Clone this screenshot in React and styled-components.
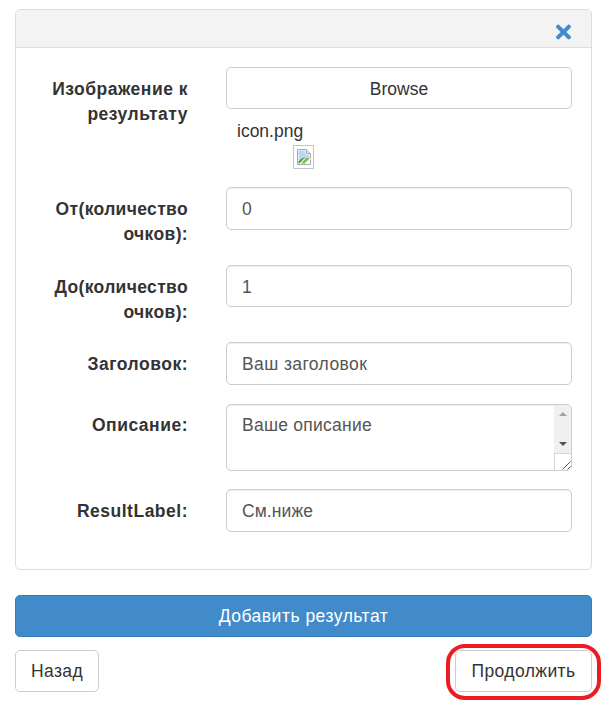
import styled, { createGlobalStyle } from "styled-components";
import { FaTimes } from "react-icons/fa";

const GlobalStyle = createGlobalStyle`
  html, body { margin: 0; padding: 0; background: #ffffff; }
  body { font-family: "Liberation Sans", Arial, sans-serif; font-size: 17.5px; color: #333333; }
  * { box-sizing: border-box; }
`;

const BrokenImage = () => (
  <svg width="16" height="16" viewBox="0 0 16 16">
    <path d="M1.5 .5H10.5L14.5 4.5V15.5H1.5Z" fill="#ffffff" stroke="#a9a9a9" />
    <path d="M10.5 .5V4.5H14.5" fill="#e8e8e8" stroke="#a9a9a9" />
    <path d="M2.5 1.5H9.5V5.5H13.5V9L2.5 11Z" fill="#bcd5f2" />
    <path d="M2.5 14.5V12.5C5 9.5 7 8.5 9 8.5L3.5 14.5Z" fill="#4f9e2f" />
    <path d="M5 14.5L10 9H13.5V10.5L9 14.5Z" fill="#7dbb4f" />
    <path d="M9.5 14.5L14.5 9.5" stroke="#ffffff" strokeWidth="1.5" />
  </svg>
);

const App = () => {
  return (
    <Page>
      <GlobalStyle />
      <Panel>
        <PanelHeader>
          <CloseButton aria-label="close">
            <FaTimes />
          </CloseButton>
        </PanelHeader>
        <PanelBody>
          <FormRow>
            <FieldLabel>Изображение к результату</FieldLabel>
            <Field>
              <BrowseButton>Browse</BrowseButton>
              <FileName>icon.png</FileName>
              <Thumb>
                <BrokenImage />
              </Thumb>
            </Field>
          </FormRow>
          <FormRow>
            <FieldLabel $spacing={0.35}>От(количество очков):</FieldLabel>
            <Field>
              <TextInput defaultValue="0" />
            </Field>
          </FormRow>
          <FormRow>
            <FieldLabel $spacing={0.35}>До(количество очков):</FieldLabel>
            <Field>
              <TextInput defaultValue="1" />
            </Field>
          </FormRow>
          <FormRow>
            <FieldLabel>Заголовок:</FieldLabel>
            <Field>
              <TextInput $spacing={0.4} defaultValue="Ваш заголовок" />
            </Field>
          </FormRow>
          <FormRow>
            <FieldLabel>Описание:</FieldLabel>
            <Field>
              <AreaWrap>
                <TextArea defaultValue="Ваше описание" />
                <ScrollBar>
                  <ScrollTrack>
                    <ArrowUp />
                    <ArrowDown />
                  </ScrollTrack>
                  <ResizeCorner>
                    <svg width="12" height="12" viewBox="0 0 12 12">
                      <path d="M3.5 11.5L11.5 3.5M8.5 11.5L11.5 8.5" stroke="#555555" strokeWidth="1" fill="none" />
                    </svg>
                  </ResizeCorner>
                </ScrollBar>
              </AreaWrap>
            </Field>
          </FormRow>
          <FormRow>
            <FieldLabel>ResultLabel:</FieldLabel>
            <Field>
              <TextInput $spacing={0.1} defaultValue="См.ниже" />
            </Field>
          </FormRow>
        </PanelBody>
      </Panel>
      <AddButton>Добавить результат</AddButton>
      <Footer>
        <NavButton>Назад</NavButton>
        <Highlighted>
          <NavButton $wide>Продолжить</NavButton>
        </Highlighted>
      </Footer>
    </Page>
  );
};

const Page = styled.div`
  width: 614px;
  height: 702px;
  padding: 9px 22px 0 15px;
  overflow: hidden;
`;
const Panel = styled.div`
  border: 1px solid #dddddd;
  border-radius: 5px;
  height: 561px;
  overflow: hidden;
`;
const PanelHeader = styled.div`
  height: 38px;
  background: #f3f3f3;
  border-bottom: 1px solid #dddddd;
  display: flex;
  align-items: center;
  justify-content: flex-end;
  padding: 7px 20px 0 0;
`;
const CloseButton = styled.span`
  display: flex;
  color: #428bca;
  svg { width: 15px; height: 22px; }
`;
const PanelBody = styled.div`
  padding: 19px 19px 0 19px;
  display: flex;
  flex-direction: column;
  gap: 18.75px;
`;
const FormRow = styled.div`
  display: grid;
  grid-template-columns: 153px 346px;
  column-gap: 38px;
`;
const FieldLabel = styled.label`
  padding-top: 9.75px;
  margin: 0 0 -1px -10px;
  font-weight: 700;
  line-height: 25px;
  letter-spacing: ${(p) => p.$spacing ?? 0.5}px;
  text-align: right;
`;
const Field = styled.div`
  display: flex;
  flex-direction: column;
  align-items: flex-start;
`;
const BrowseButton = styled.button`
  width: 100%;
  height: 42px;
  padding-top: 3px;
  background: #ffffff;
  border: 1px solid #cccccc;
  border-radius: 5px;
  font: inherit;
  color: #333333;
`;
const FileName = styled.div`
  margin: 9.5px 0 0 11px;
  line-height: 25px;
`;
const Thumb = styled.div`
  width: 21px;
  height: 24px;
  margin: 1px 0 0 67px;
  border: 1px solid #c4c4c4;
  display: flex;
  align-items: center;
  justify-content: center;
`;
const TextInput = styled.input`
  width: 100%;
  height: 42.5px;
  padding: 2px 15px 0;
  background: #ffffff;
  border: 1px solid #cccccc;
  border-radius: 5px;
  font: inherit;
  letter-spacing: ${(p) => p.$spacing || 0}px;
  color: #555555;
  box-shadow: inset 0 1px 1px rgba(0, 0, 0, 0.075);
  outline: none;
`;
const AreaWrap = styled.div`
  position: relative;
  width: 100%;
  height: 67px;
`;
const TextArea = styled.textarea`
  display: block;
  width: 100%;
  height: 100%;
  padding: 8px 15px;
  background: #ffffff;
  border: 1px solid #cccccc;
  border-radius: 5px;
  font: inherit;
  letter-spacing: 0.25px;
  line-height: 25px;
  color: #555555;
  box-shadow: inset 0 1px 1px rgba(0, 0, 0, 0.075);
  overflow: hidden;
  resize: none;
  outline: none;
`;
const ScrollBar = styled.div`
  position: absolute;
  top: 1px;
  right: 1px;
  bottom: 1px;
  width: 17px;
  display: flex;
  flex-direction: column;
`;
const ScrollTrack = styled.div`
  flex: 1;
  background: #f0f0f0;
  border-top-right-radius: 4px;
  display: flex;
  flex-direction: column;
  align-items: center;
  justify-content: space-between;
  padding: 7px 0 7px;
`;
const ArrowUp = styled.span`
  width: 0;
  height: 0;
  border-left: 4px solid transparent;
  border-right: 4px solid transparent;
  border-bottom: 4px solid #a3a3a3;
`;
const ArrowDown = styled.span`
  width: 0;
  height: 0;
  border-left: 4px solid transparent;
  border-right: 4px solid transparent;
  border-top: 4px solid #505050;
`;
const ResizeCorner = styled.div`
  height: 17px;
  background: #ffffff;
  border-top: 1px solid #d4d4d4;
  border-left: 1px solid #d4d4d4;
  display: flex;
  align-items: flex-end;
  justify-content: flex-end;
`;
const AddButton = styled.button`
  display: block;
  width: 100%;
  height: 42px;
  margin-top: 25px;
  padding-top: 2px;
  background: #428bca;
  border: 1px solid #357ebd;
  border-radius: 5px;
  font: inherit;
  letter-spacing: 0.5px;
  color: #ffffff;
`;
const Footer = styled.div`
  margin-top: 13px;
  display: flex;
  justify-content: space-between;
`;
const NavButton = styled.button`
  display: block;
  width: ${(p) => (p.$wide ? "137px" : "84px")};
  height: 42px;
  padding-top: 2px;
  background: #ffffff;
  border: 1px solid #cccccc;
  border-radius: 5px;
  font: inherit;
  letter-spacing: 0.4px;
  color: #333333;
`;
const Highlighted = styled.div`
  position: relative;
  &::after {
    content: "";
    position: absolute;
    inset: -6px -9px -8px -9px;
    border: 4.5px solid #ed1c24;
    border-radius: 19px;
    pointer-events: none;
  }
`;

export default App;
